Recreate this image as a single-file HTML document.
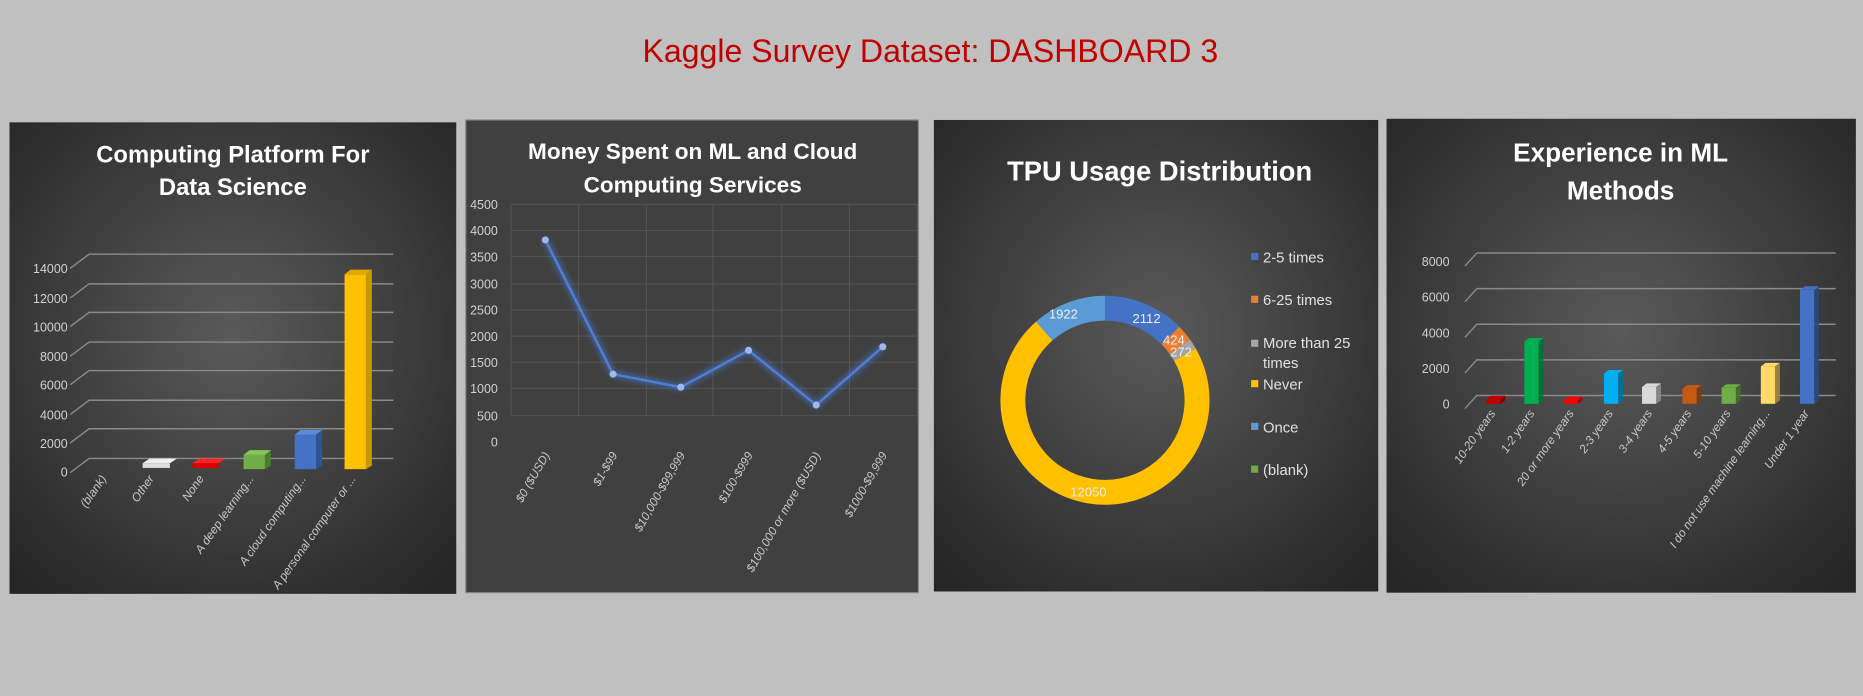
<!DOCTYPE html>
<html><head><meta charset="utf-8"><style>
html,body{margin:0;padding:0;background:#c0c0c0;width:1863px;height:696px;overflow:hidden}
svg{display:block}
text{font-family:"Liberation Sans",sans-serif}
.t{font-weight:bold;fill:#fff;text-anchor:middle}
.ax{fill:#d0d0d0;font-size:10.5px;font-family:"Liberation Sans Narrow","Liberation Sans",sans-serif}
.xl{fill:#c8c8c8;font-size:10px;font-style:italic;text-anchor:end;font-family:"Liberation Sans Narrow","Liberation Sans",sans-serif}
.lg{fill:#e0e0e0;font-size:12.5px;font-family:"Liberation Sans Narrow","Liberation Sans",sans-serif}
</style></head><body>
<svg width="1863" height="696" viewBox="0 0 1568 586" preserveAspectRatio="none">
<defs>
<radialGradient id="g" cx="50%" cy="45%" r="70%"><stop offset="0" stop-color="#5a5a5a"/><stop offset="1" stop-color="#262626"/></radialGradient>
<filter id="glow"><feGaussianBlur stdDeviation="2.5"/></filter>
</defs>
<rect width="1568" height="586" fill="#c0c0c0"/>
<text x="783" y="52" text-anchor="middle" font-size="27" fill="#c00000">Kaggle Survey Dataset: DASHBOARD 3</text>

<!-- Panel 1 -->
<rect x="8" y="103" width="376" height="397" fill="url(#g)"/>
<text class="t" x="196" y="137" font-size="20">Computing Platform For</text>
<text class="t" x="196" y="164" font-size="20">Data Science</text>
<g stroke="#8a8a8a" stroke-width="1.2" fill="none">
<path d="M59,226 L75,214 H331"/><path d="M59,251 L75,239 H331"/><path d="M59,275 L75,263 H331"/><path d="M59,300 L75,288 H331"/><path d="M59,324 L75,312 H331"/><path d="M59,349 L75,337 H331"/><path d="M59,373 L75,361 H331"/><path d="M59,398 L75,386 H331"/>
</g>
<g class="ax" text-anchor="end">
<text x="57" y="230">14000</text><text x="57" y="255">12000</text><text x="57" y="279">10000</text><text x="57" y="304">8000</text><text x="57" y="328">6000</text><text x="57" y="353">4000</text><text x="57" y="377">2000</text><text x="57" y="401">0</text>
</g>
<g>
<polygon points="120,390 143,390 149,386 126,386" fill="#eee"/><rect x="120" y="390" width="23" height="4" fill="#ddd"/>
<polygon points="162,390 184,390 190,386 168,386" fill="#f22"/><rect x="162" y="390" width="22" height="4" fill="#d00"/>
<rect x="205" y="383" width="18" height="12" fill="#70ad47"/><polygon points="223,383 228,379 228,392 223,395" fill="#4c7a30"/><polygon points="205,383 210,379 228,379 223,383" fill="#86c55a"/>
<rect x="248" y="366" width="18" height="29" fill="#4472c4"/><polygon points="266,366 271,362 271,392 266,395" fill="#2f5496"/><polygon points="248,366 253,362 271,362 266,366" fill="#5b8ad8"/>
<rect x="290" y="231" width="18" height="164" fill="#ffc000"/><polygon points="308,231 313,227 313,392 308,395" fill="#c99700"/><polygon points="290,231 295,227 313,227 308,231" fill="#e0a800"/>
</g>
<g class="xl">
<text transform="translate(90,403) rotate(-55)">(blank)</text>
<text transform="translate(130,403) rotate(-55)">Other</text>
<text transform="translate(172,403) rotate(-55)">None</text>
<text transform="translate(214,403) rotate(-55)">A deep learning...</text>
<text transform="translate(258,403) rotate(-55)">A cloud computing...</text>
<text transform="translate(300,403) rotate(-55)">A personal computer or ...</text>
</g>

<!-- Panel 2 -->
<rect x="392" y="101" width="381" height="398" fill="#404040" stroke="#8a8a8a" stroke-width="1"/>
<text class="t" x="583" y="134" font-size="19">Money Spent on ML and Cloud</text>
<text class="t" x="583" y="162" font-size="19">Computing Services</text>
<g stroke="#555" stroke-width="0.8">
<path d="M430,172H772M430,194H772M430,216H772M430,239H772M430,261H772M430,283H772M430,305H772M430,327H772M430,350H772"/>
<path d="M430,172V350M487,172V350M544,172V350M600,172V350M658,172V350M715,172V350M772,172V350"/>
</g>
<g class="ax" text-anchor="end" fill="#ccc">
<text x="419" y="176">4500</text><text x="419" y="198">4000</text><text x="419" y="220">3500</text><text x="419" y="243">3000</text><text x="419" y="265">2500</text><text x="419" y="287">2000</text><text x="419" y="309">1500</text><text x="419" y="331">1000</text><text x="419" y="354">500</text><text x="419" y="376">0</text>
</g>
<polyline points="459,202 516,315 573,326 630,295 687,341 743,292" fill="none" stroke="#4472c4" stroke-width="5" opacity="0.7" filter="url(#glow)"/>
<polyline points="459,202 516,315 573,326 630,295 687,341 743,292" fill="none" stroke="#4f7fd6" stroke-width="2"/>
<g fill="#9fb8ec"><circle cx="459" cy="202" r="3"/><circle cx="516" cy="315" r="3"/><circle cx="573" cy="326" r="3"/><circle cx="630" cy="295" r="3"/><circle cx="687" cy="341" r="3"/><circle cx="743" cy="292" r="3"/></g>
<g class="xl" fill="#bbb">
<text transform="translate(463,383) rotate(-60)">$0 ($USD)</text>
<text transform="translate(520,383) rotate(-60)">$1-$99</text>
<text transform="translate(577,383) rotate(-60)">$10,000-$99,999</text>
<text transform="translate(634,383) rotate(-60)">$100-$999</text>
<text transform="translate(691,383) rotate(-60)">$100,000 or more ($USD)</text>
<text transform="translate(747,383) rotate(-60)">$1000-$9,999</text>
</g>

<!-- Panel 3 -->
<rect x="786" y="101" width="374" height="397" fill="url(#g)"/>
<text class="t" x="976" y="152" font-size="23">TPU Usage Distribution</text>
<g transform="translate(930,337)" id="donut"></g>
<g class="lg">
<rect x="1053" y="213" width="6" height="6" fill="#4472c4"/><text x="1063" y="221">2-5 times</text>
<rect x="1053" y="249" width="6" height="6" fill="#ed7d31"/><text x="1063" y="257">6-25 times</text>
<rect x="1053" y="286" width="6" height="6" fill="#a5a5a5"/><text x="1063" y="293">More than 25</text><text x="1063" y="310">times</text>
<rect x="1053" y="320" width="6" height="6" fill="#ffc000"/><text x="1063" y="328">Never</text>
<rect x="1053" y="356" width="6" height="6" fill="#5b9bd5"/><text x="1063" y="364">Once</text>
<rect x="1053" y="392" width="6" height="6" fill="#70ad47"/><text x="1063" y="400">(blank)</text>
</g>
<g fill="#eee" font-size="11" text-anchor="middle">
<text x="965" y="272">2112</text><text x="988" y="290">424</text><text x="994" y="300">272</text><text x="916" y="418">12050</text><text x="895" y="268">1922</text>
</g>

<!-- Panel 4 -->
<rect x="1167" y="100" width="395" height="399" fill="url(#g)"/>
<text class="t" x="1364" y="136" font-size="22">Experience in ML</text>
<text class="t" x="1364" y="168" font-size="22">Methods</text>
<g stroke="#8a8a8a" stroke-width="1.2" fill="none">
<path d="M1233,224 L1243,213 H1545"/><path d="M1233,254 L1243,243 H1545"/><path d="M1233,284 L1243,273 H1545"/><path d="M1233,314 L1243,303 H1545"/><path d="M1233,344 L1243,333 H1545"/>
</g>
<g class="ax" text-anchor="end">
<text x="1220" y="224">8000</text><text x="1220" y="254">6000</text><text x="1220" y="284">4000</text><text x="1220" y="314">2000</text><text x="1220" y="344">0</text>
</g>
<g id="bars4"></g>
<g class="xl">
<text transform="translate(1259,348) rotate(-55)">10-20 years</text>
<text transform="translate(1292,348) rotate(-55)">1-2 years</text>
<text transform="translate(1325,348) rotate(-55)">20 or more years</text>
<text transform="translate(1358,348) rotate(-55)">2-3 years</text>
<text transform="translate(1391,348) rotate(-55)">3-4 years</text>
<text transform="translate(1424,348) rotate(-55)">4-5 years</text>
<text transform="translate(1457,348) rotate(-55)">5-10 years</text>
<text transform="translate(1490,348) rotate(-55)">I do not use machine learning...</text>
<text transform="translate(1523,348) rotate(-55)">Under 1 year</text>
</g>
</svg>
<script>
var ns="http://www.w3.org/2000/svg";
(function(){
 var d=[[2112,"#4472c4"],[424,"#ed7d31"],[272,"#a5a5a5"],[12050,"#ffc000"],[1922,"#5b9bd5"]];
 var tot=16780,a=-Math.PI/2,R=88,r=67,g=document.getElementById("donut");
 d.forEach(function(s){var b=a+s[0]/tot*2*Math.PI;var l=(b-a)>Math.PI?1:0;
  var p="M"+R*Math.cos(a)+","+R*Math.sin(a)+"A"+R+","+R+" 0 "+l+" 1 "+R*Math.cos(b)+","+R*Math.sin(b)+"L"+r*Math.cos(b)+","+r*Math.sin(b)+"A"+r+","+r+" 0 "+l+" 0 "+r*Math.cos(a)+","+r*Math.sin(a)+"Z";
  var e=document.createElementNS(ns,"path");e.setAttribute("d",p);e.setAttribute("fill",s[1]);g.appendChild(e);a=b;});
 var bars=[[1257,250,"#c00000"],[1289,3500,"#00b050"],[1322,150,"#ff0000"],[1356,1700,"#00b0f0"],[1388,950,"#d9d9d9"],[1422,850,"#c55a11"],[1455,900,"#70ad47"],[1488,2100,"#ffd966"],[1521,6400,"#4472c4"]];
 var G=document.getElementById("bars4"),base=340;
 bars.forEach(function(b){var h=Math.max(b[1]*0.015,3),x=b[0]-6,w=12,y=base-h;
  var f=document.createElementNS(ns,"rect");f.setAttribute("x",x);f.setAttribute("y",y);f.setAttribute("width",w);f.setAttribute("height",h);f.setAttribute("fill",b[2]);G.appendChild(f);
  var s=document.createElementNS(ns,"polygon");s.setAttribute("points",(x+w)+","+y+" "+(x+w+4)+","+(y-3)+" "+(x+w+4)+","+(base-3)+" "+(x+w)+","+base);s.setAttribute("fill",b[2]);s.setAttribute("opacity","0.8");G.appendChild(s);
  var t=document.createElementNS(ns,"polygon");t.setAttribute("points",x+","+y+" "+(x+4)+","+(y-3)+" "+(x+w+4)+","+(y-3)+" "+(x+w)+","+y);t.setAttribute("fill",b[2]);G.appendChild(t);
  var sh=document.createElementNS(ns,"polygon");sh.setAttribute("points",(x+w)+","+y+" "+(x+w+4)+","+(y-3)+" "+(x+w+4)+","+(base-3)+" "+(x+w)+","+base);sh.setAttribute("fill","#000");sh.setAttribute("opacity","0.3");G.appendChild(sh);});
})();
</script>
</body></html>
